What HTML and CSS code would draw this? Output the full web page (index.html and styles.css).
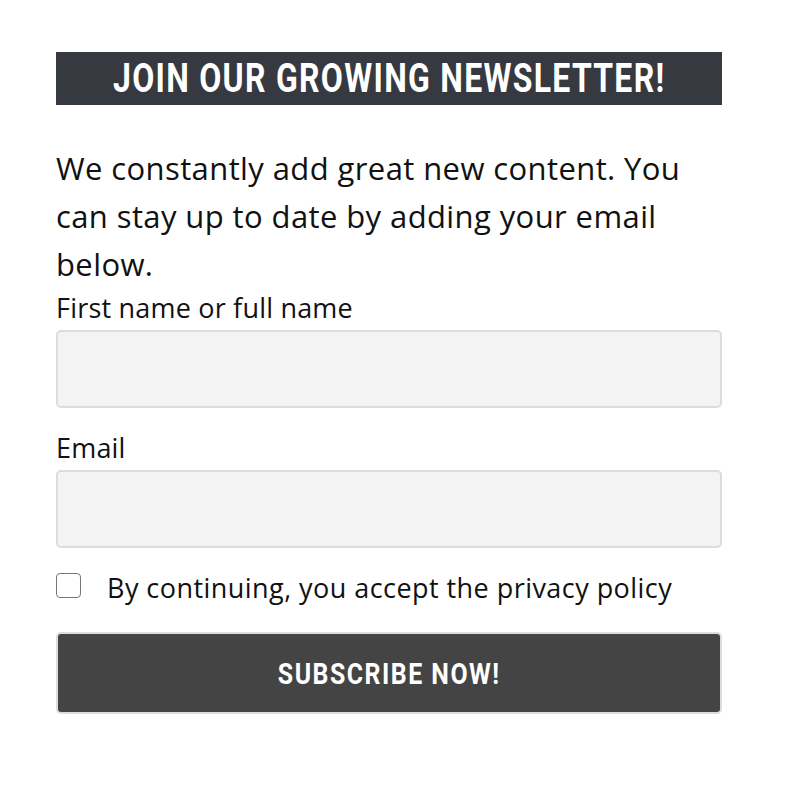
FILE: index.html
```html
<!DOCTYPE html>
<html>
<head>
<meta charset="utf-8">
<link rel="stylesheet" href="styles.css">
</head>
<body>
<div class="wrap">
  <h2 class="title"><span class="cond">JOIN OUR GROWING NEWSLETTER!</span></h2>
  <p class="intro">We constantly add great new content. You can stay up to date by adding your email below.</p>
  <form class="form">
    <label class="label">First name or full name</label>
    <input class="field" type="text">
    <label class="label label-email">Email</label>
    <input class="field" type="email">
    <label class="consent"><span class="box"></span><span>By continuing, you accept the privacy policy</span></label>
    <button class="btn" type="button"><span class="cond cond-btn">SUBSCRIBE NOW!</span></button>
  </form>
</div>
</body>
</html>
```
FILE: styles.css
```css
html, body { margin: 0; padding: 0; background: #fff; }
body { font-family: "Open Sans", "Noto Sans", sans-serif; color: #111; }
.wrap { width: 666px; margin-left: 56px; padding-top: 52px; }
.title {
  margin: 0; height: 53px; background: #363940; color: #fff;
  display: flex; justify-content: center; align-items: center;
  font-family: Roboto, sans-serif;
  font-weight: bold; font-size: 40px; line-height: 53px;
  white-space: nowrap; letter-spacing: 1.6px;
}
.cond { display: inline-block; flex: none; transform: scaleX(0.8); }
.cond-btn { transform: scaleX(0.83); }
.intro { margin: 0; padding-top: 39px; font-size: 31px; line-height: 48px; letter-spacing: 0.4px; }
.form { display: flex; flex-direction: column; }
.label { font-size: 27px; line-height: 40px; margin-top: 0; letter-spacing: 0.2px; }
.label-email { margin-top: 20px; }
.field {
  box-sizing: border-box; height: 78px; width: 100%; margin: 2px 0 0;
  background: #f3f3f3; border: 2px solid #dcdcdc; border-radius: 5px;
}
.consent { display: flex; align-items: center; gap: 26px; margin-top: 22px; font-size: 27px; line-height: 36px; letter-spacing: 0.45px; }
.box { box-sizing: border-box; width: 25px; height: 25px; border: 1.5px solid #777; border-radius: 4px; flex: none; margin-top: -6px; }
.btn {
  margin-top: 26px; height: 82px; background: #444; color: #fff;
  border: 2px solid #ddd; border-radius: 5px;
  font-family: Roboto, sans-serif;
  font-weight: bold; font-size: 30px; white-space: nowrap; letter-spacing: 1.8px;
}
```
